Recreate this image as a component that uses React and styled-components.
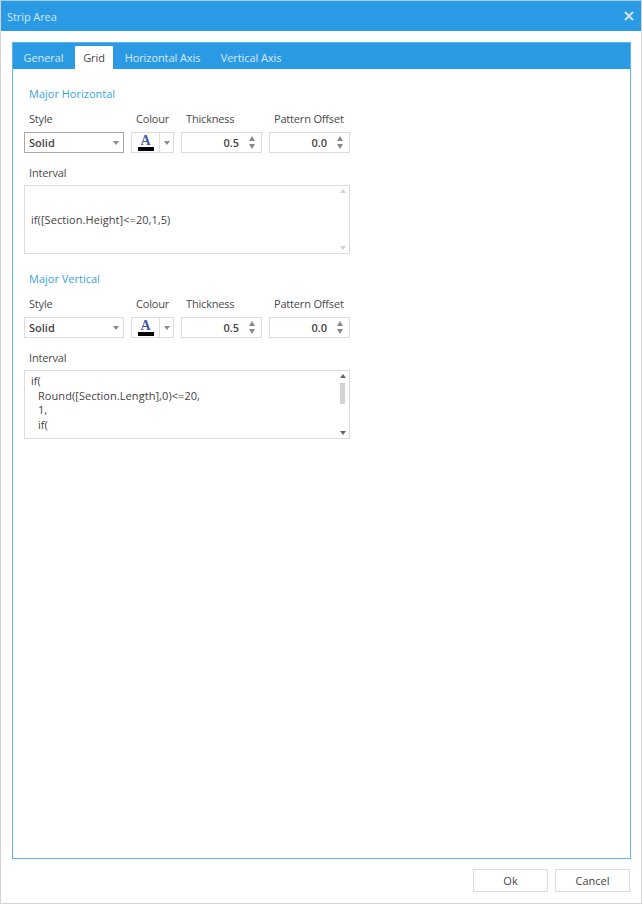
import React from "react";
import styled, { createGlobalStyle } from "styled-components";

const Global = createGlobalStyle`
  html, body { margin: 0; padding: 0; background: #fff; }
  body { font-family: "Open Sans", "Noto Sans", sans-serif; font-size: 11px; color: #444; }
`;
const Win = styled.div`
  width: 642px; height: 904px; box-sizing: border-box;
  border: 1px solid #d4d4d4; border-top-color: #9fcdf0;
  display: flex; flex-direction: column; background: #fff; overflow: hidden;
`;
const TitleBar = styled.div`
  height: 30px; flex: none; background: #2b9ae4; color: #cfe8fa;
  display: flex; align-items: center; justify-content: space-between;
  padding: 0 6px 0 6px; font-size: 11px; letter-spacing: -0.08px;
`;
const CloseBtn = styled.svg`width: 10px; height: 10px; display: block; margin-right: 1px;`;
const Body = styled.div`
  flex: 1; display: flex; flex-direction: column; padding: 11px 10px 0 11px; min-height: 0;
`;
const Panel = styled.div`
  flex: 1; min-height: 0; display: flex; flex-direction: column;
  border: 1px solid #5fb4ec; background: #fff;
`;
const TabStrip = styled.div`
  height: 26px; flex: none; background: #2b9ae4; display: flex; align-items: flex-end; padding-left: 1px;
`;
const Tab = styled.div`
  height: 23px; display: flex; align-items: center; justify-content: center; box-sizing: border-box;
  width: ${p => p.$w}px; margin-right: ${p => p.$mr || 0}px;
  font-size: 11px; letter-spacing: -0.08px; white-space: nowrap;
  background: ${p => (p.$active ? "#fff" : "transparent")};
  color: ${p => (p.$active ? "#444" : "#d5ebfb")};
`;
const Content = styled.div`
  padding: 17px 0 0 11px; width: 326px; display: flex; flex-direction: column;
`;
const Heading = styled.div`
  color: #3aa2e6; font-size: 11px; line-height: 16px; padding-left: 5px;
  margin-bottom: 9px;
  margin-top: ${p => p.$mt || 0}px;
`;
const FieldRow = styled.div`display: flex; gap: 7px;`;
const Field = styled.div`display: flex; flex-direction: column; width: ${p => p.$w}px;`;
const Label = styled.div`
  font-size: 11px; letter-spacing: -0.18px; line-height: 16px; height: 16px; padding-left: 5px; margin-bottom: 5px; white-space: nowrap; color: #4a4a4a;
`;
const Select = styled.div`
  height: 21px; box-sizing: border-box; border: 1px solid ${p => (p.$strong ? "#a8a8a8" : "#dcdcdc")};
  display: flex; align-items: center; justify-content: space-between; padding: 0 4px 0 4px;
  font-weight: 600; font-size: 11px; color: #444;
`;
const Caret = styled.span`
  width: 0; height: 0; border-left: 3.5px solid transparent; border-right: 3.5px solid transparent;
  border-top: 4px solid #8a8a8a; display: block;
`;
const ColourBox = styled.div`
  height: 21px; box-sizing: border-box; border: 1px solid #dcdcdc; display: flex;
`;
const ColourMain = styled.div`
  width: 27px; display: flex; flex-direction: column; align-items: center; border-right: 1px solid #dcdcdc;
`;
const ColourA = styled.span`
  font-family: "Liberation Serif", serif; font-weight: 700; font-size: 14px; line-height: 13px; color: #3f5a9e; margin-top: 1px;
`;
const ColourBar = styled.span`width: 16px; height: 4px; background: #000; display: block;`;
const ColourDrop = styled.div`flex: 1; display: flex; align-items: center; justify-content: center;`;
const Spinner = styled.div`
  height: 21px; box-sizing: border-box; border: 1px solid #dcdcdc; display: flex; align-items: center; justify-content: flex-end;
  padding-right: 6px; gap: 10px; font-weight: 600; font-size: 11px; color: #444;
`;
const Arrows = styled.div`display: flex; flex-direction: column; gap: 3px;`;
const Up = styled.span`
  display: block; width: 0; height: 0; border-left: 3.5px solid transparent; border-right: 3.5px solid transparent;
  border-bottom: 5px solid #8a8a8a;
`;
const Down = styled(Up)`border-bottom: 0; border-top: 5px solid #8a8a8a;`;
const IntervalLabel = styled(Label)`margin-top: 12px; margin-bottom: 4px;`;
const Editor = styled.div`
  height: 69px; box-sizing: border-box; border: 1px solid #dcdcdc; position: relative;
  display: flex; flex-direction: column; justify-content: ${p => (p.$center ? "center" : "flex-start")};
  padding: ${p => (p.$center ? "2px" : "3px")} 0 0 6px; font-size: 11px; letter-spacing: 0.06px; line-height: 14.7px; color: #444;
`;
const Code = styled.div`white-space: pre; padding-left: ${p => (p.$indent ? 7 : 0)}px;`;
const ScrollTrack = styled.div`
  position: absolute; right: 3px; top: 3px; bottom: 3px; width: 7px;
  display: flex; flex-direction: column; align-items: center; justify-content: space-between;
`;
const SUp = styled.span`
  display: block; width: 0; height: 0; border-left: 3px solid transparent; border-right: 3px solid transparent;
  border-bottom: 4px solid ${p => p.$c};
`;
const SDown = styled.span`
  display: block; width: 0; height: 0; border-left: 3px solid transparent; border-right: 3px solid transparent;
  border-top: 4px solid ${p => p.$c};
`;
const Thumb = styled.span`
  position: absolute; top: 9px; left: 1px; width: 5px; height: 21px; background: #d3d3d3;
`;
const Footer = styled.div`
  height: 44px; flex: none; display: flex; justify-content: flex-end; align-items: flex-start; gap: 7px; padding: 10px 11px 0 0; box-sizing: border-box;
`;
const Btn = styled.div`
  width: 75px; height: 23px; box-sizing: border-box; border: 1px solid #dcdcdc; display: flex; align-items: center; justify-content: center;
  font-size: 11px; color: #444;
`;

const Row = ({ strong }) => (
  <FieldRow>
    <Field $w={100}>
      <Label>Style</Label>
      <Select $strong={strong}>Solid<Caret /></Select>
    </Field>
    <Field $w={43}>
      <Label>Colour</Label>
      <ColourBox>
        <ColourMain><ColourA>A</ColourA><ColourBar /></ColourMain>
        <ColourDrop><Caret /></ColourDrop>
      </ColourBox>
    </Field>
    <Field $w={81}>
      <Label>Thickness</Label>
      <Spinner>0.5<Arrows><Up /><Down /></Arrows></Spinner>
    </Field>
    <Field $w={81}>
      <Label>Pattern Offset</Label>
      <Spinner>0.0<Arrows><Up /><Down /></Arrows></Spinner>
    </Field>
  </FieldRow>
);

export default function App() {
  return (
    <Win>
      <Global />
      <TitleBar>
        Strip Area
        <CloseBtn viewBox="0 0 10 10">
          <path d="M1 1 L9 9 M9 1 L1 9" stroke="#cfe8fa" strokeWidth="2" fill="none" />
        </CloseBtn>
      </TitleBar>
      <Body>
        <Panel>
          <TabStrip>
            <Tab $w={59} $mr={2}>General</Tab>
            <Tab $w={38} $active $mr={1}>Grid</Tab>
            <Tab $w={97}>Horizontal Axis</Tab>
            <Tab $w={80}>Vertical Axis</Tab>
          </TabStrip>
          <Content>
            <Heading>Major Horizontal</Heading>
            <Row strong />
            <IntervalLabel>Interval</IntervalLabel>
            <Editor $center>
              <Code>if([Section.Height]&lt;=20,1,5)</Code>
              <ScrollTrack><SUp $c="#d0d0d0" /><SDown $c="#d0d0d0" /></ScrollTrack>
            </Editor>
            <Heading $mt={17}>Major Vertical</Heading>
            <Row />
            <IntervalLabel>Interval</IntervalLabel>
            <Editor>
              <Code>if(</Code>
              <Code $indent>Round([Section.Length],0)&lt;=20,</Code>
              <Code $indent>1,</Code>
              <Code $indent>if(</Code>
              <ScrollTrack><SUp $c="#666" /><Thumb /><SDown $c="#666" /></ScrollTrack>
            </Editor>
          </Content>
        </Panel>
      </Body>
      <Footer>
        <Btn>Ok</Btn>
        <Btn>Cancel</Btn>
      </Footer>
    </Win>
  );
}
